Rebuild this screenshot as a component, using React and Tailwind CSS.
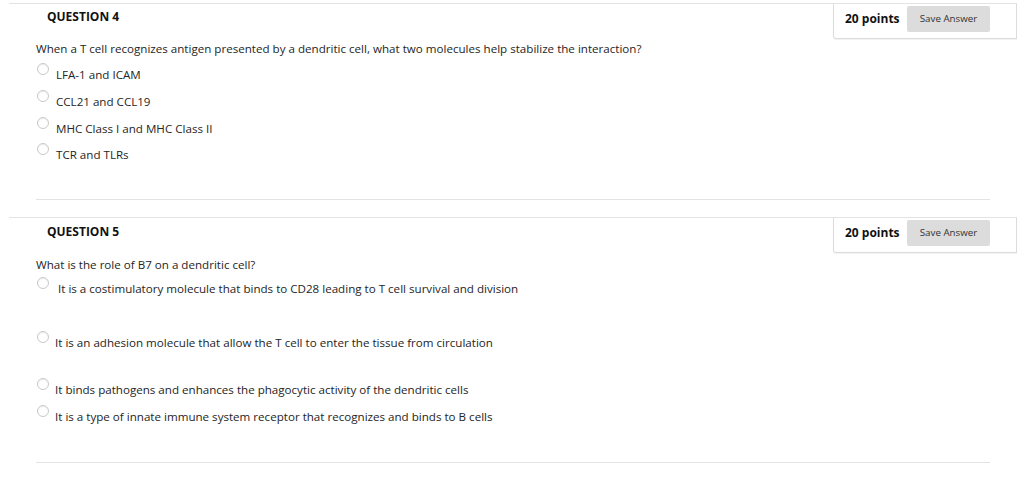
import React from "react";

function Radio() {
  return (
    <span className="block w-[12px] h-[12px] rounded-full border border-[#c9c9c9] bg-white shadow-[inset_0_1px_1px_rgba(0,0,0,0.08)] shrink-0" />
  );
}

function Option({ text, cls, textCls }) {
  return (
    <div className={"flex items-start ml-[37px] " + cls}>
      <div className="mt-[-4px]">
        <Radio />
      </div>
      <span className={"leading-[16px] text-[11.6px] text-[#252525] " + textCls}>{text}</span>
    </div>
  );
}

function Header({ title, titleCls }) {
  return (
    <div className="ml-[9px] w-[1008px] border-t border-[#e3e3e3] flex justify-between items-start">
      <div className={"ml-[38px] text-[12px] font-bold text-[#111] leading-[16px] " + titleCls}>{title}</div>
      <div className="h-[35px] w-[184px] border-l border-r border-b border-[#dcdcdc] rounded-bl-[3px] shadow-[0_1px_1px_rgba(0,0,0,0.06)] flex items-start justify-between">
        <div className="ml-[11px] mt-[7px] text-[12px] font-bold text-[#111] leading-[16px]">20 points</div>
        <div className="mr-[26px] mt-[2px] w-[83px] h-[26px] bg-[#dcdcdc] rounded-[2px] flex items-center justify-center text-[9.75px] text-[#333]">
          Save Answer
        </div>
      </div>
    </div>
  );
}

export default function App() {
  return (
    <div className="w-[1024px] h-[491px] bg-white overflow-hidden pt-[3px]" style={{ fontFamily: '"Open Sans", "Noto Sans", sans-serif' }}>
      {/* Question 4 */}
      <Header title="QUESTION 4" titleCls="mt-[5px]" />
      <div className="ml-[36px] mt-[2px] leading-[16px] text-[11.6px] text-[#252525]">
        When a T cell recognizes antigen presented by a dendritic cell, what two molecules help stabilize the interaction?
      </div>
      <Option text="LFA-1 and ICAM" cls="mt-[10px]" textCls="ml-[7px]" />
      <Option text="CCL21 and CCL19" cls="mt-[11px]" textCls="ml-[7px]" />
      <Option text="MHC Class I and MHC Class II" cls="mt-[11px]" textCls="ml-[7px]" />
      <Option text="TCR and TLRs" cls="mt-[10px]" textCls="ml-[7px]" />
      <div className="ml-[36px] w-[954px] mt-[36px] border-t border-[#e3e3e3]" />

      {/* Question 5 */}
      <div className="mt-[17px]">
        <Header title="QUESTION 5" titleCls="mt-[6px]" />
      </div>
      <div className="ml-[36px] mt-[4px] leading-[16px] text-[11.6px] text-[#252525]">
        What is the role of B7 on a dendritic cell?
      </div>
      <Option
        text="It is a costimulatory molecule that binds to CD28 leading to T cell survival and division"
        cls="mt-[8px]"
        textCls="ml-[9px]"
      />
      <Option
        text="It is an adhesion molecule that allow the T cell to enter the tissue from circulation"
        cls="mt-[38px]"
        textCls="ml-[6px]"
      />
      <Option
        text="It binds pathogens and enhances the phagocytic activity of the dendritic cells"
        cls="mt-[31px]"
        textCls="ml-[6px]"
      />
      <Option
        text="It is a type of innate immune system receptor that recognizes and binds to B cells"
        cls="mt-[11px]"
        textCls="ml-[6px]"
      />
      <div className="ml-[36px] w-[954px] mt-[37px] border-t border-[#e3e3e3]" />
    </div>
  );
}
